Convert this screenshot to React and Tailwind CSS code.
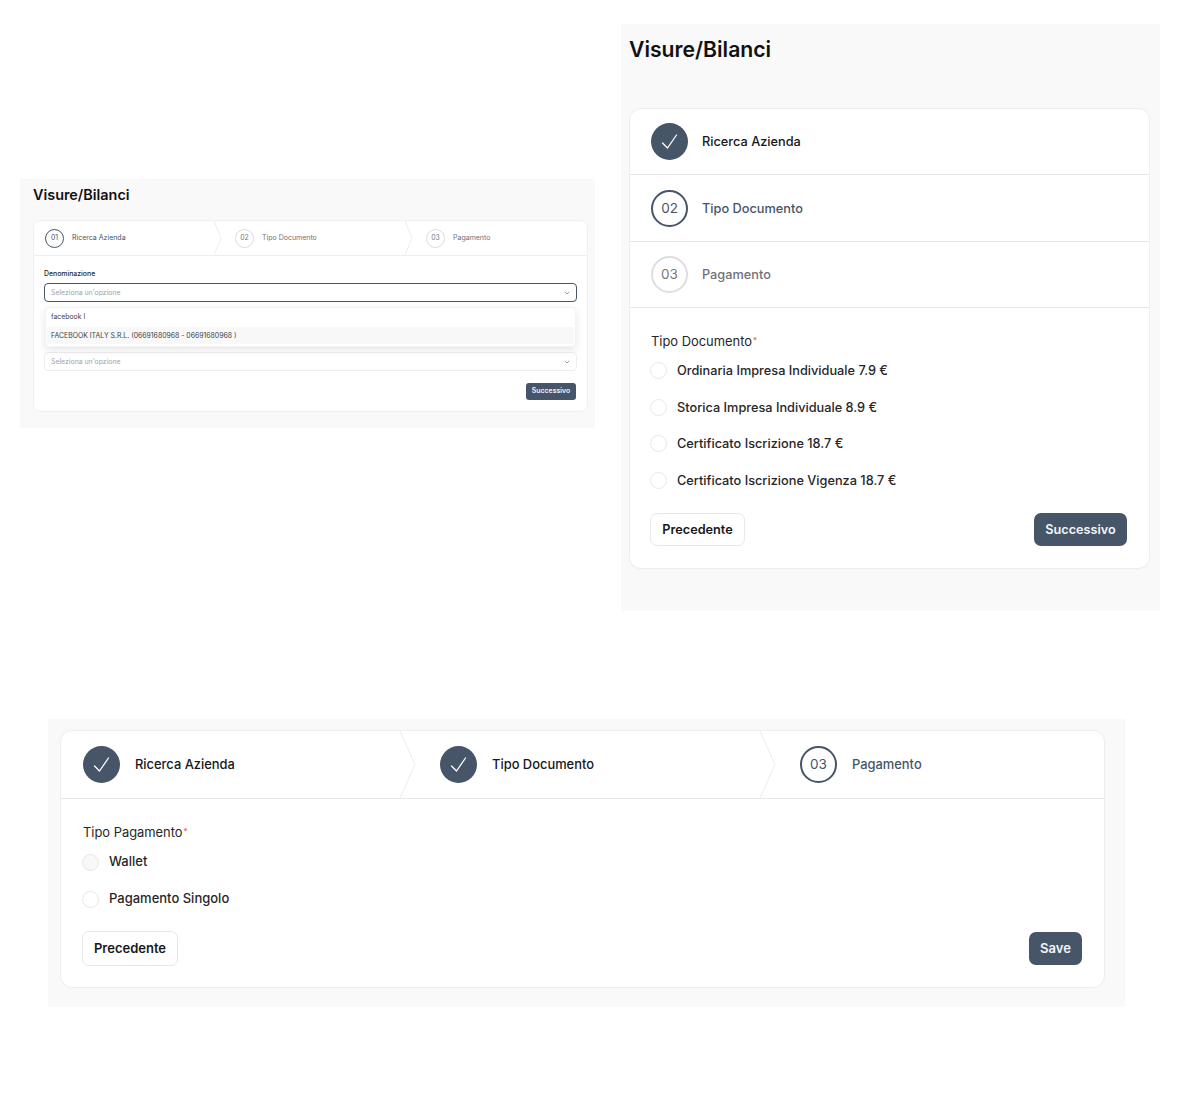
import React from 'react';
import { ChevronDown } from 'lucide-react';

// thin check mark used in the finished steps
const CheckMark = () => (
    <svg width="37" height="37" viewBox="0 0 37 37" fill="none">
        <path d="M11.5 20L16.5 25L25.5 12" stroke="#fff" strokeWidth="1.3" strokeLinecap="round" strokeLinejoin="round" />
    </svg>
);

// arrow divider between two steps of the horizontal stepper
const StepArrow = ({ width, height }) => (
    <svg className="absolute top-0 right-0" width={width} height={height} viewBox={`0 0 ${width} ${height}`} fill="none">
        <path d={`M0 0L${width - 1} ${height / 2}L0 ${height}`} stroke="#ececec" strokeWidth="1" />
    </svg>
);

const BigCircle = ({ status, number }) => {
    if (status === 'done') {
        return (
            <div className="w-[37px] h-[37px] shrink-0 rounded-full bg-[#475569] flex items-center justify-center">
                <CheckMark />
            </div>
        );
    }
    return (
        <div className={`w-[37px] h-[37px] shrink-0 rounded-full border-2 flex items-center justify-center text-[13.5px] ${status === 'active' ? 'border-[#475569] text-[#475569]' : 'border-[#dedee0] text-[#77777f]'}`}>
            {number}
        </div>
    );
};

const bigLabel = {
    done: 'text-[#18181b]',
    active: 'text-[#475569]',
    todo: 'text-[#71717a]',
};

const Radio = ({ label, gray, textSize }) => (
    <label className="flex items-center h-[18px]">
        <span className={`w-[17px] h-[17px] rounded-full border border-[#e8e8e8] ${gray ? 'bg-[#f8f8f8]' : 'bg-white'}`}></span>
        <span className={`font-medium text-[#27272a] ml-[10px] ${textSize}`}>{label}</span>
    </label>
);

const FieldLabel = ({ text }) => (
    <p className="text-[12.9px] leading-[18px] text-[#27272a]">
        {text}
        <span className="text-[#ef4444] text-[8px] align-top relative -top-[2px] ml-[1px]">*</span>
    </p>
);

const OutlineButton = ({ className, children }) => (
    <button className={`rounded-[7px] border border-[#e8e8e8] bg-white font-semibold text-[#18181b] ${className}`}>
        {children}
    </button>
);

const DarkButton = ({ className, children }) => (
    <button className={`rounded-[7px] bg-[#475569] font-semibold text-[#f1f5f9] ${className}`}>
        {children}
    </button>
);

const SmallSelect = ({ focused }) => (
    <div className={`h-[19px] rounded-[4px] border flex items-center justify-between pl-[6px] pr-[5px] pt-[1px] bg-white ${focused ? 'border-[#475569]' : 'border-[#eeeeee]'}`}>
        <span className="text-[6.9px] text-[#a1a1aa]">Seleziona un'opzione</span>
        <ChevronDown size={8} color="#71717a" />
    </div>
);

const SmallStep = ({ number, label, status, className, last }) => (
    <div className={`relative h-[34px] flex items-center ${className}`}>
        <div className={`w-[19px] h-[19px] rounded-full border flex items-center justify-center text-[6.9px] ${status === 'active' ? 'border-[#475569] text-[#475569]' : 'border-[#dcdcdf] text-[#77777f]'}`}>
            {number}
        </div>
        <span className={`ml-[8px] text-[7px] ${status === 'active' ? 'text-[#475569]' : 'text-[#71717a]'}`}>{label}</span>
        {!last && <StepArrow width={8} height={34} />}
    </div>
);

const SearchPanel = () => (
    <section className="w-[575px] h-[249px] mt-[155px] bg-[#f9f9f9] pl-[13px] pt-[6px] shrink-0">
        <h2 className="text-[14.4px] leading-[20px] font-semibold text-[#111113]">Visure/Bilanci</h2>
        <div className="w-[555px] h-[192px] mt-[15px] bg-white rounded-[7px] border border-[#f0f0f0]">
            <div className="flex border-b border-[#eeeeee]">
                <SmallStep number="01" label="Ricerca Azienda" status="active" className="w-[188px] pl-[11px]" />
                <SmallStep number="02" label="Tipo Documento" status="todo" className="w-[191px] pl-[13px]" />
                <SmallStep number="03" label="Pagamento" status="todo" className="flex-1 pl-[13px]" last />
            </div>
            <div className="relative px-[10px] pt-[13px]">
                <p className="text-[6.9px] leading-[9px] font-medium text-[#27272a] mb-[5px]">Denominazione</p>
                <SmallSelect focused />
                <div className="absolute z-10 left-[11px] top-[51px] w-[531px] h-[40px] bg-white rounded-[4px] border border-[#f3f3f3] shadow-[0_3px_8px_rgba(0,0,0,0.10)] p-[1px]">
                    <p className="h-[17px] flex items-center pl-[4px] text-[6.9px] text-[#3f3f46]">facebook l</p>
                    <p className="h-[17px] mt-[1px] pt-[1px] flex items-center pl-[4px] text-[6.9px] text-[#3f3f46] bg-[#f8f8f8] rounded-[2px]">FACEBOOK ITALY S.R.L. (06691680968 - 06691680968 )</p>
                </div>
                <div className="mt-[50px]">
                    <SmallSelect />
                </div>
                <div className="flex justify-end mt-[12px] mr-[1px]">
                    <button className="w-[50px] h-[17px] rounded-[3px] bg-[#475569] text-[6.9px] font-semibold text-[#f1f5f9]">Successivo</button>
                </div>
            </div>
        </div>
    </section>
);

const DocumentPanel = () => (
    <section className="w-[539px] h-[587px] ml-[26px] bg-[#f9f9f9] pl-[8px] pt-[10px] shrink-0">
        <h2 className="text-[21.2px] leading-[30px] font-semibold text-[#111113]">Visure/Bilanci</h2>
        <div className="w-[521px] h-[461px] mt-[44px] bg-white rounded-[12px] border border-[#eeeeee] shadow-[0_1px_1px_rgba(0,0,0,0.02)]">
            {[
                { number: '01', label: 'Ricerca Azienda', status: 'done' },
                { number: '02', label: 'Tipo Documento', status: 'active' },
                { number: '03', label: 'Pagamento', status: 'todo' },
            ].map((step) => (
                <div key={step.number} className="h-[66.4px] flex items-center pl-[21px] border-b border-[#e8e8e8]">
                    <BigCircle status={step.status} number={step.number} />
                    <span className={`ml-[14px] text-[12.75px] font-medium ${bigLabel[step.status]}`}>{step.label}</span>
                </div>
            ))}
            <div className="pl-[20px] pr-[22px] pt-[25px]">
                <div className="ml-[1px]">
                    <FieldLabel text="Tipo Documento" />
                </div>
                <div className="flex flex-col gap-[18.5px] mt-[10.5px]">
                    <Radio label="Ordinaria Impresa Individuale 7.9 €" textSize="text-[12.75px]" />
                    <Radio label="Storica Impresa Individuale 8.9 €" textSize="text-[12.75px]" />
                    <Radio label="Certificato Iscrizione 18.7 €" textSize="text-[12.75px]" />
                    <Radio label="Certificato Iscrizione Vigenza 18.7 €" textSize="text-[12.75px]" />
                </div>
                <div className="flex justify-between mt-[23.5px]">
                    <OutlineButton className="w-[95px] h-[33px] text-[12.7px]">Precedente</OutlineButton>
                    <DarkButton className="w-[93px] h-[33px] text-[12.7px]">Successivo</DarkButton>
                </div>
            </div>
        </div>
    </section>
);

const PaymentPanel = () => (
    <section className="w-[1077px] h-[288px] ml-[48px] mt-[108px] bg-[#f9f9f9] pl-[12px] pt-[11px]">
        <div className="w-[1045px] h-[258px] bg-white rounded-[12px] border border-[#eeeeee]">
            <div className="flex border-b border-[#e8e8e8]">
                <div className="relative w-[355px] h-[67px] flex items-center pl-[22px]">
                    <BigCircle status="done" />
                    <span className={`ml-[15px] text-[12.9px] font-medium ${bigLabel.done}`}>Ricerca Azienda</span>
                    <StepArrow width={16} height={67} />
                </div>
                <div className="relative w-[360px] h-[67px] flex items-center pl-[24px]">
                    <BigCircle status="done" />
                    <span className={`ml-[15px] text-[12.9px] font-medium ${bigLabel.done}`}>Tipo Documento</span>
                    <StepArrow width={16} height={67} />
                </div>
                <div className="flex-1 h-[67px] flex items-center pl-[24px]">
                    <BigCircle status="active" number="03" />
                    <span className={`ml-[15px] text-[12.9px] font-medium ${bigLabel.active}`}>Pagamento</span>
                </div>
            </div>
            <div className="pl-[21px] pr-[22px] pt-[25px]">
                <div className="ml-[1px]">
                    <FieldLabel text="Tipo Pagamento" />
                </div>
                <div className="flex flex-col gap-[19px] mt-[11px]">
                    <Radio label="Wallet" gray textSize="text-[13px]" />
                    <Radio label="Pagamento Singolo" textSize="text-[13px]" />
                </div>
                <div className="flex justify-between items-center mt-[23px]">
                    <OutlineButton className="w-[96px] h-[35px] text-[13px]">Precedente</OutlineButton>
                    <DarkButton className="w-[53px] h-[33px] text-[13px]">Save</DarkButton>
                </div>
            </div>
        </div>
    </section>
);

const App = () => {
    return (
        <div className="w-[1190px] h-[1102px] bg-white font-[Inter,sans-serif] antialiased overflow-hidden">
            <div className="flex items-start pt-[24px] pl-[20px]">
                <SearchPanel />
                <DocumentPanel />
            </div>
            <PaymentPanel />
        </div>
    );
};

export default App;
